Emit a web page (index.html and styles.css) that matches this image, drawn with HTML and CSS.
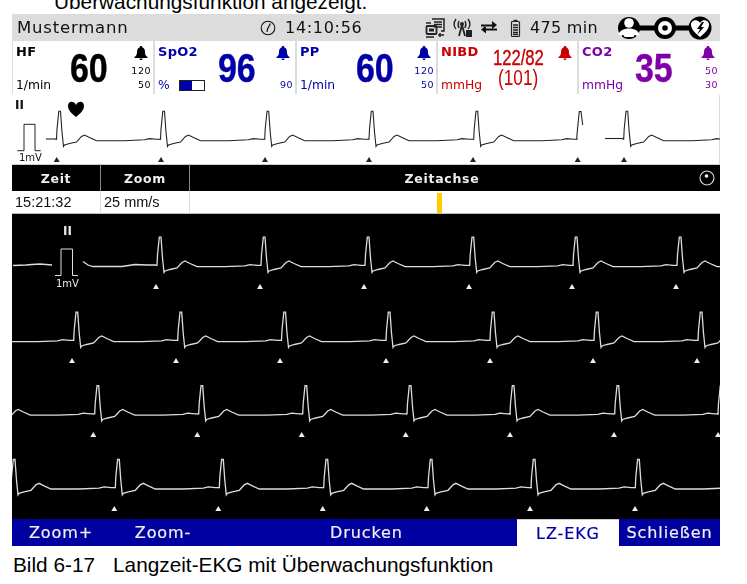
FILE: index.html
```html
<!DOCTYPE html>
<html lang="de">
<head>
<meta charset="utf-8">
<title>Langzeit-EKG</title>
<link rel="stylesheet" href="styles.css">
</head>
<body>
<p class="intro">Überwachungsfunktion angezeigt.</p>
<main class="monitor">
  <header class="status">
    <span class="patient">Mustermann</span>
    <svg class="clock" viewBox="0 0 16 16"><circle cx="8" cy="8" r="6.800" fill="none" stroke="#111" stroke-width="1.100"/><path d="M10.500 3.500 7.500 9 7 12" fill="none" stroke="#111" stroke-width="1.200"/></svg>
    <span class="time">14:10:56</span>
    <svg class="net" viewBox="0 0 20 20"><path d="M7 1h12v12h-3M9 4h8M9 6.500h8M9 9h8" fill="none" stroke="#222" stroke-width="1.500"/><rect x="1.500" y="8" width="10" height="8" rx="1" fill="none" stroke="#222" stroke-width="1.800"/><rect x="4" y="10.500" width="5" height="3" fill="#222"/><path d="M1 5h5M1 19h8M13 17h6M15 15v4" stroke="#222" stroke-width="1.500"/></svg>
    <svg class="ant" viewBox="0 0 20 20"><path d="M3 1C0 5 1 9 3 11M6 3C5 5 5 8 6 10M15 1c3 4 2 8 0 10M12 3c1 2 1 5 0 7" fill="none" stroke="#222" stroke-width="1.400"/><circle cx="9" cy="6" r="2" fill="#222"/><path d="M9 7 6 18M9 7l3 11" stroke="#222" stroke-width="1.800"/><rect x="13" y="12" width="6" height="7" fill="#222"/></svg>
    <svg class="swap" viewBox="0 0 16 13"><path d="M0 3.500h11V0l5 4-5 4V5.500H0zM16 7.500H5V4.500l-5 4 5 4V9.500h11z" fill="#111"/></svg>
    <svg class="batt" viewBox="0 0 10 18"><path d="M3 .8h4v1.500H3z" fill="#222"/><rect x="1" y="2.500" width="8" height="15" rx="1" fill="none" stroke="#222" stroke-width="1.200"/><path d="M2.500 6h5M2.500 8.500h5M2.500 11h5M2.500 13.500h5M2.500 15.500h5" stroke="#222" stroke-width="1.400"/></svg>
    <span class="runtime">475 min</span>
    <svg class="chain" viewBox="0 0 94 24">
      <rect x="10" y="9.500" width="72" height="5" fill="#000"/>
      <circle cx="11" cy="12" r="11" fill="#000"/>
      <circle cx="11" cy="7" r="4.800" fill="#fff"/>
      <path d="M.5 19c.5-4 5-6.500 10.500-6.500S21 15 21.500 19l-3 1c-1-1.500-2-1.500-3 1h-9c-1-2.500-2-2.500-3-1z" fill="#fff"/>
      <circle cx="47" cy="12" r="11" fill="#000"/>
      <circle cx="47" cy="12" r="7" fill="#fff"/>
      <circle cx="47" cy="12" r="2.800" fill="#000"/>
      <circle cx="82" cy="12" r="11.500" fill="#000"/>
      <path d="M82 21C77 17 73 13 73 8.500 73 5 77 3.500 79 4.500c1.500.5 2.500 1.500 3 2.500.5-1 1.500-2 3-2.500 2-1 6 .5 6 4 0 4.500-4 8.500-9 12.500z" fill="#fff"/>
      <path d="M84 6l-5 7h3l-3 6 7-8h-3l3-5z" fill="#000"/>
    </svg>
  </header>

  <section class="params">
    <article class="param black">
      <div class="labels w38"><b class="name">HF</b><span class="unit">1/min</span></div>
      <div class="value"><span class="digits">60</span></div>
      <div class="alarm"><svg class="bell" viewBox="0 0 14 14"><use href="#bell"/></svg><span class="limit">120</span><span class="limit">50</span></div>
    </article>
    <article class="param blue">
      <div class="labels w50"><b class="name">SpO2</b><span class="unit">% <i class="bar"><i class="bar-fill"></i></i></span></div>
      <div class="value"><span class="digits">96</span></div>
      <div class="alarm"><svg class="bell" viewBox="0 0 14 14"><use href="#bell"/></svg><span class="limit">&nbsp;</span><span class="limit">90</span></div>
    </article>
    <article class="param blue">
      <div class="labels w43"><b class="name">PP</b><span class="unit">1/min</span></div>
      <div class="value"><span class="digits">60</span></div>
      <div class="alarm"><svg class="bell" viewBox="0 0 14 14"><use href="#bell"/></svg><span class="limit">120</span><span class="limit">50</span></div>
    </article>
    <article class="param red">
      <div class="labels w48"><b class="name">NIBD</b><span class="unit">mmHg</span></div>
      <div class="value nibd"><span class="sys">122/82</span><span class="map">(101)</span></div>
      <div class="alarm"><svg class="bell" viewBox="0 0 14 14"><use href="#bell"/></svg></div>
    </article>
    <article class="param purple">
      <div class="labels w35"><b class="name">CO2</b><span class="unit">mmHg</span></div>
      <div class="value"><span class="digits">35</span></div>
      <div class="alarm"><svg class="bell" viewBox="0 0 14 14"><use href="#bell"/></svg><span class="limit">50</span><span class="limit">30</span></div>
    </article>
  </section>

  <section class="strip">
    <svg class="strip-svg" viewBox="0 0 708 70" width="708" height="70">
      <text x="3" y="14.500" class="lead dark">II</text>
      <path d="M64 11C62 6.500 56 6.500 56 12 56 16 60 20 64 23 68 20 72 16 72 12 72 6.500 66 6.500 64 11z" fill="#000"/>
      <path d="M5.300 56.700H12V30.300H23V56.700H28.700" fill="none" stroke="#222"/>
      <text x="7" y="67" class="cal dark">1mV</text>
      <g fill="none" stroke="#222" stroke-width="1.100">
        <path d="M34 45H45"/>
        <use href="#beat" x="47.500" y="45"/>
        <use href="#beat" x="151.500" y="45"/>
        <use href="#beat" x="255.700" y="45"/>
        <use href="#beat" x="360" y="45"/>
        <use href="#beat" x="464.700" y="45"/>
        <path d="M564.700 45 565.500 35 567.300 17.500H569L570.700 31"/>
        <path d="M593 44.500H611.500"/>
        <use href="#beat" x="614.700" y="45"/>
      </g>
      <g fill="#222">
        <use href="#tri" x="44.700" y="67"/><use href="#tri" x="149" y="67"/><use href="#tri" x="253" y="67"/><use href="#tri" x="357" y="67"/><use href="#tri" x="461" y="67"/><use href="#tri" x="565.700" y="67"/><use href="#tri" x="612" y="67"/>
      </g>
    </svg>
  </section>

  <section class="timeline">
    <div class="cell head zeit">Zeit</div>
    <div class="cell head">Zoom</div>
    <div class="cell head axis">Zeitachse
      <svg class="knob" viewBox="0 0 16 16"><circle cx="8" cy="8" r="7" fill="none" stroke="#ddd" stroke-width="1.100"/><circle cx="7.500" cy="6" r="1.800" fill="#fff"/></svg>
    </div>
    <div class="cell data">15:21:32</div>
    <div class="cell data">25 mm/s</div>
    <div class="cell track"><span class="marker"></span></div>
  </section>

  <section class="long">
    <svg class="long-svg" viewBox="0 0 708 304" width="708" height="304">
      <text x="51" y="21" class="lead light">II</text>
      <path d="M43 61.500H49V35H60.500V61.500H66" fill="none" stroke="#ddd"/>
      <text x="44" y="72.500" class="cal light">1mV</text>
      <g fill="none" stroke="#ddd" stroke-width="1.300">
        <path d="M1 51.500 14 51 20 50.500 28 50 40 51M71 47.500 76 51 81 52.500H110L123 50.500 135 51 144 51"/>
        <use href="#beat" x="148" y="51"/><use href="#beat" x="252" y="51"/><use href="#beat" x="356" y="51"/><use href="#beat" x="460.700" y="51"/><use href="#beat" x="564" y="51"/><use href="#beat" x="668" y="51"/>

        <use href="#beat" x="-39.500" y="126"/><use href="#beat" x="64.700" y="126"/><use href="#beat" x="168.700" y="126"/><use href="#beat" x="272.500" y="126"/><use href="#beat" x="377" y="126"/><use href="#beat" x="481" y="126"/><use href="#beat" x="585" y="126"/><use href="#beat" x="689" y="126"/>

        <use href="#beat" x="-18.700" y="199.500"/><use href="#beat" x="85.700" y="199.500"/><use href="#beat" x="189.700" y="199.500"/><use href="#beat" x="293.700" y="199.500"/><use href="#beat" x="398" y="199.500"/><use href="#beat" x="501" y="199.500"/><use href="#beat" x="605.700" y="199.500"/><use href="#beat" x="709" y="199.500"/>

        <use href="#beat" x="2" y="273.300"/><use href="#beat" x="106.300" y="273.300"/><use href="#beat" x="210.300" y="273.300"/><use href="#beat" x="314.700" y="273.300"/><use href="#beat" x="419" y="273.300"/><use href="#beat" x="522" y="273.300"/><use href="#beat" x="626.300" y="273.300"/>
      </g>
      <g fill="#eee">
        <use href="#tri" x="144" y="74"/><use href="#tri" x="248" y="74"/><use href="#tri" x="352" y="74"/><use href="#tri" x="457" y="74"/><use href="#tri" x="560" y="74"/><use href="#tri" x="664" y="74"/>
        <use href="#tri" x="60" y="148"/><use href="#tri" x="164" y="148"/><use href="#tri" x="268" y="148"/><use href="#tri" x="374" y="148"/><use href="#tri" x="478" y="148"/><use href="#tri" x="581" y="148"/><use href="#tri" x="685" y="148"/>
        <use href="#tri" x="81.300" y="222"/><use href="#tri" x="185.300" y="222"/><use href="#tri" x="289.700" y="222"/><use href="#tri" x="393.700" y="222"/><use href="#tri" x="498" y="222"/><use href="#tri" x="602" y="222"/><use href="#tri" x="706" y="222"/>
        <use href="#tri" x="102.300" y="296"/><use href="#tri" x="206.300" y="296"/><use href="#tri" x="310.700" y="296"/><use href="#tri" x="414.700" y="296"/><use href="#tri" x="518" y="296"/><use href="#tri" x="623" y="296"/>
      </g>
    </svg>
  </section>

  <nav class="softkeys">
    <button class="key">Zoom+</button>
    <button class="key">Zoom-</button>
    <button class="key">Drucken</button>
    <button class="key active">LZ-EKG</button>
    <button class="key">Schließen</button>
  </nav>
</main>
<p class="caption"><span class="caption-no">Bild 6-17</span>Langzeit-EKG mit Überwachungsfunktion</p>

<svg class="defs" width="0" height="0" aria-hidden="true">
  <defs>
    <symbol id="bell" viewBox="0 0 14 14"><path d="M7 0c1 0 1.500.7 1.500 1.500C10.500 2.300 11 4 11 6.500c0 2 1 3.500 2.500 4.500v1H.5v-1C2 10 3 8.500 3 6.500 3 4 3.500 2.300 5.500 1.500 5.500.7 6 0 7 0zM5.500 12.500h3C8.500 13.500 8 14 7 14s-1.500-.5-1.500-1.500z" fill="currentColor"/></symbol>
    <path id="beat" d="M-4 .3H-3L-2.500-10-.7-27.800H1L2.500-7 4 7.500 5 6 10 4.500 17 3 22-2.500 25-4 30-1.500 37 1.700H65L85 .8 90-.4 97 .3 101 .3"/>
    <path id="tri" d="M0-4 3 1H-3z"/>
  </defs>
</svg>
</body>
</html>
```
FILE: styles.css
```css
* { box-sizing: border-box; }
html, body { margin: 0; padding: 0; background: #fff; }
body { width: 747px; height: 584px; overflow: hidden; font-family: "DejaVu Sans", sans-serif; }

.intro {
  margin: -11px 0 0;
  height: 25px;
  padding-left: 54px;
  font: 20.8px/25px "Liberation Sans", sans-serif;
  color: #000;
  white-space: nowrap;
}

.monitor { margin-left: 12px; width: 708px; height: 532px; display: flex; flex-direction: column; filter: blur(.3px); }

/* status bar */
.status { height: 27px; background: #dcdcdc; display: flex; align-items: center; color: #111; flex: none; }
.patient { margin-left: 5px; font-size: 16.5px; letter-spacing: .8px; width: 243px; }
.clock { width: 16px; height: 16px; }
.time { margin-left: 9px; font-size: 16px; letter-spacing: .7px; width: 140px; }
.net { width: 20px; height: 20px; }
.ant { width: 20px; height: 20px; margin-left: 8px; }
.swap { width: 16px; height: 13px; margin-left: 8px; }
.batt { width: 11px; height: 18px; margin-left: 13px; }
.runtime { margin-left: 9px; font-size: 16px; letter-spacing: .3px; width: 88px; }
.chain { width: 94px; height: 24px; overflow: hidden; }

/* parameter tiles */
.params { height: 53px; flex: none; display: grid; grid-template-columns: 140px 140px 139px 139px 141px; column-gap: 2px; padding: 0 0 2px 1px; background: #dcdcdc; }
.param { background: #fff; display: flex; padding: 3px 2px 3px 3px; position: relative; min-width: 0; }
.black { color: #000; }
.blue { color: #0000a8; }
.red { color: #c80000; }
.purple { color: #8000a8; }
.labels { display: flex; flex-direction: column; justify-content: space-between; flex: none; }
.w35 { width: 35px; }
.w38 { width: 38px; }
.w43 { width: 43px; }
.w48 { width: 48px; }
.w50 { width: 50px; }
.name { font-size: 13px; line-height: 16px; letter-spacing: .3px; white-space: nowrap; }
.unit { font-size: 12.300px; line-height: 14px; display: flex; align-items: center; gap: 9px; white-space: nowrap; }
.bar { width: 26px; height: 11px; border: 1px solid #222; background: #fff; display: block; flex: none; }
.bar-fill { width: 12px; height: 100%; background: #0000a8; display: block; }
.value { flex: 1; min-width: 0; display: flex; align-items: center; justify-content: center; }
.digits { font: 700 41px/46px "Liberation Sans", sans-serif; display: inline-block; transform: scaleX(.83); -webkit-text-stroke: .4px currentColor; }
.nibd { flex-direction: column; }
.sys { font: 400 22.500px/20px "Liberation Sans", sans-serif; transform: scaleX(.74); -webkit-text-stroke: .4px currentColor; white-space: nowrap; }
.map { font: 400 21.500px/20px "Liberation Sans", sans-serif; transform: scaleX(.8); }
.alarm { width: 28px; flex: none; display: flex; flex-direction: column; align-items: flex-end; padding-top: 2px; }
.bell { width: 14px; height: 14px; margin-right: 3px; margin-bottom: 4px; display: block; }
.limit { font-size: 9.500px; line-height: 14px; letter-spacing: .5px; }

/* small ECG strip */
.strip { height: 70px; flex: none; background: #fff; border-right: 1px solid #dcdcdc; }
.strip-svg, .long-svg { display: block; }
.lead { font: 700 12px "DejaVu Sans", sans-serif; }
.cal { font: 400 10px "DejaVu Sans", sans-serif; }
.dark { fill: #111; }
.light { fill: #e8e8e8; }

/* time table */
.timeline { flex: none; display: grid; grid-template-columns: 89px 89px 1fr; grid-template-rows: 27px 23px; background: #fff; }
.cell { display: flex; align-items: center; }
.head { background: #000; color: #eee; font-weight: 700; font-size: 12.500px; letter-spacing: .7px; justify-content: center; border-right: 1px solid #888; border-top: 1px solid #ccc; position: relative; }
.axis { border-right: 0; padding-right: 26px; }
.knob { width: 16px; height: 16px; position: absolute; right: 5px; top: 5px; }
.data { font: 400 14.500px "Liberation Sans", sans-serif; color: #111; padding-left: 3px; border-right: 1px solid #dcdcdc; border-bottom: 1px solid #bbb; }
.track { border-bottom: 1px solid #bbb; padding-left: 247px; align-items: flex-start; }
.marker { width: 5px; height: 20px; margin-top: 2px; background: #ffcc00; display: block; }

/* long ECG */
.long { flex: none; height: 305px; background: #000; }

/* softkeys */
.softkeys { flex: none; height: 27px; display: grid; grid-template-columns: 98px 106px 301px 102px 101px; background: #0000a0; }
.key { border: 0; padding: 0; background: #0000a0; color: #eee; font: 400 16px "DejaVu Sans", sans-serif; letter-spacing: .9px; -webkit-text-stroke: .2px currentColor; }
.active { background: #fff; color: #0000a8; border-top: 1px solid #ccc; }

/* caption */
.caption { margin: 8px 0 0 13px; font: 20.800px/22px "Liberation Sans", sans-serif; color: #000; white-space: nowrap; }
.caption-no { display: inline-block; width: 100px; }

.defs { position: absolute; }
```
